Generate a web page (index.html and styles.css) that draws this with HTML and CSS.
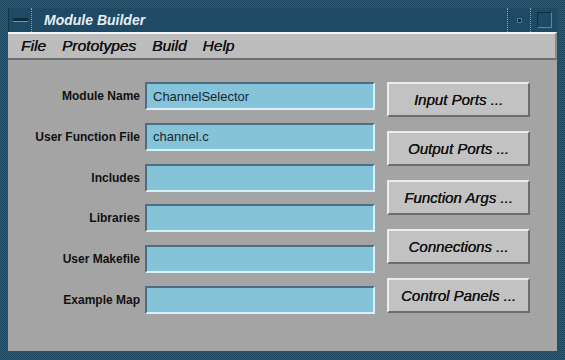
FILE: index.html
```html
<!DOCTYPE html>
<html lang="en">
<head>
    <meta charset="UTF-8">
    <title>Module Builder</title>
    <link rel="stylesheet" href="styles.css">
</head>
<body>
    <div class="window">
        <div class="titlebar">
            <div class="tb-btn menu-btn"><span class="dash"></span></div>
            <div class="title">Module Builder</div>
            <div class="tb-btn min-btn"><span class="dot"></span></div>
            <div class="tb-btn max-btn"><span class="box"></span></div>
        </div>
        <div class="menubar">
            <span class="menu-item">File</span>
            <span class="menu-item">Prototypes</span>
            <span class="menu-item">Build</span>
            <span class="menu-item">Help</span>
        </div>
        <div class="content">
            <div class="fields">
                <label>Module Name</label>
                <input type="text" value="ChannelSelector">
                <label>User Function File</label>
                <input type="text" value="channel.c">
                <label>Includes</label>
                <input type="text" value="">
                <label>Libraries</label>
                <input type="text" value="">
                <label>User Makefile</label>
                <input type="text" value="">
                <label>Example Map</label>
                <input type="text" value="">
            </div>
            <div class="buttons">
                <button>Input Ports ...</button>
                <button>Output Ports ...</button>
                <button>Function Args ...</button>
                <button>Connections ...</button>
                <button>Control Panels ...</button>
            </div>
        </div>
    </div>
</body>
</html>
```

FILE: styles.css
```css
body {
    margin: 0;
    font-family: "Liberation Sans", Arial, sans-serif;
}
.window {
    width: 565px;
    height: 360px;
    box-sizing: border-box;
    padding: 8px 8px 9px 8px;
    display: flex;
    flex-direction: column;
    background-color: #23506b;
    background-image: repeating-conic-gradient(#2c5d7b 0 25%, #1b445e 0 50%);
    background-size: 2px 2px;
}
.titlebar {
    height: 24px;
    display: flex;
    background-color: #1f4a65;
    border-left: 1px solid #123347;
}
.tb-btn {
    display: flex;
    align-items: center;
    justify-content: center;
}
.menu-btn {
    width: 22px;
    border-right: 1px dotted #7fa6bf;
}
.dash {
    width: 15px;
    height: 3px;
    background: #0f2b3c;
    border-bottom: 1px solid #6f98b2;
}
.title {
    flex: 1;
    padding-left: 12px;
    line-height: 24px;
    color: #e6eef4;
    font-size: 14px;
    font-weight: bold;
    font-style: italic;
}
.min-btn {
    width: 22px;
    border-left: 1px dotted #7fa6bf;
    border-right: 1px dotted #7fa6bf;
}
.dot {
    width: 3px;
    height: 3px;
    background: #0f2b3c;
    border: 1px solid #4e7893;
}
.max-btn {
    width: 26px;
}
.box {
    width: 13px;
    height: 14px;
    border: 1px solid #0f2b3c;
    border-right-color: #5d87a1;
    border-bottom-color: #5d87a1;
}
.menubar {
    height: 24px;
    display: flex;
    align-items: center;
    padding-left: 13px;
    background: #bcbcbc;
    border-top: 2px solid #f4f4f4;
    border-bottom: 2px solid #6e6e6e;
    border-right: 2px solid #8a8a8a;
}
.menu-item {
    font-size: 15.5px;
    font-style: italic;
    color: #111;
    margin-right: 16px;
    text-shadow: 0.3px 0 0 #111;
}
.content {
    flex: 1;
    display: flex;
    align-items: flex-start;
    padding-top: 22px;
    background: #a4a4a4;
}
.fields {
    display: grid;
    grid-template-columns: 132px 230px;
    grid-auto-rows: 28px;
    column-gap: 5px;
    row-gap: 12.8px;
}
.fields label {
    text-align: right;
    align-self: center;
    font-size: 12px;
    font-weight: bold;
    color: #111;
}
.fields input {
    box-sizing: border-box;
    height: 28px;
    margin: 0;
    padding: 0 0 0 6px;
    font-family: "Liberation Sans", Arial, sans-serif;
    font-size: 13px;
    color: #182833;
    background: #85c3d9;
    border: 2px solid;
    border-color: #4d6e82 #d6f1fa #d6f1fa #4d6e82;
    outline: none;
}
.buttons {
    display: flex;
    flex-direction: column;
    gap: 14px;
    margin-left: 12px;
}
.buttons button {
    width: 143px;
    height: 35px;
    margin: 0;
    padding: 0;
    font-family: "Liberation Sans", Arial, sans-serif;
    font-size: 15px;
    font-style: italic;
    color: #111;
    text-shadow: 0.3px 0 0 #111;
    background: #c2c2c2;
    border: 2px solid;
    border-color: #ececec #6c6c6c #6c6c6c #ececec;
}
```
